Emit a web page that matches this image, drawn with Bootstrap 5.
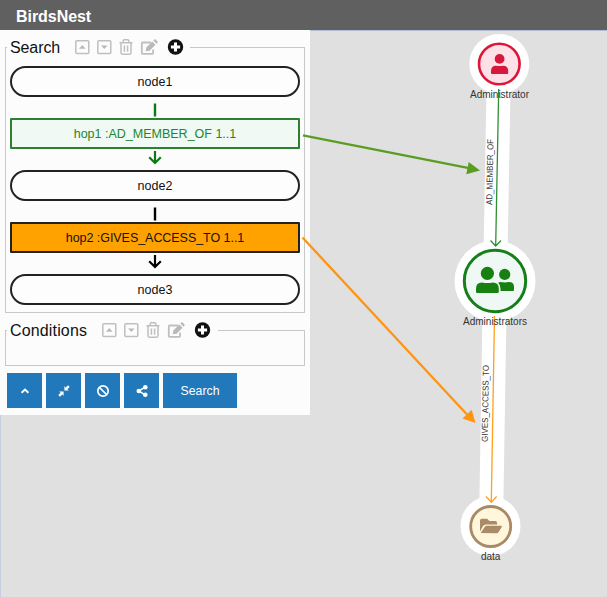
<!DOCTYPE html>
<html lang="en">
<head>
<meta charset="utf-8">
<meta name="viewport" content="width=device-width, initial-scale=1">
<title>BirdsNest</title>
<link href="https://cdn.jsdelivr.net/npm/bootstrap@5.3.0/dist/css/bootstrap.min.css" rel="stylesheet">
<style>
body { font-family: "Liberation Sans", Arial, sans-serif; color: #111; background: #e0e0e0; height: 597px; }
.top-bar { height: 30px; background: #606060; padding: 0 16px; }
.brand { font-size: 16px; font-weight: 700; line-height: 31px; padding-top: 1px; color: #fff; letter-spacing: -.05px; }
.stage { height: 567px; border-left: 1px solid #c5cfe0; border-top: 1px solid #b4bed3; }
.query-panel { width: 310px; height: 385px; margin: -1px 0 0 -1px; padding: 7px 5px 0; background: #fcfcfc; }
.group-box { border: 1px solid #c8c8c8; padding: 0 4px; }
.group-box legend { float: none; width: auto; height: 20px; margin: 0 0 0 -3px; padding: 0 6.3px 0 3px; font-size: 16px; line-height: 20px; letter-spacing: -.1px; }
.group-box legend span { padding-top: 2px; }
.path-box { height: 276px; }
.path-box legend { width: 183px; }
.cond-box { height: 46px; margin-top: 7px; }
.cond-box legend { width: 210.500px; letter-spacing: .15px; }
.path-list { padding-top: 9px; }
.step { height: 31px; border: 2px solid #222; padding-top: 1px; font-size: 12.5px; line-height: 1; }
.step-node { border-radius: 16px; background: #fdfdfd; }
.step-green { border-color: #2c8030; background: #f1f9f4; color: #23862a; border-radius: 1px; }
.step-orange { background: #ffa200; border-radius: 1px; letter-spacing: -.05px; }
.link-gap { height: 21px; }
.actions { gap: 4px; padding: 7px 2px 0; }
.actions .btn { width: 35px; height: 35px; background: #2179bb; color: #fff; border: 0; border-radius: 0; font-size: 12.3px; }
.actions .btn-wide { width: 74px; line-height: 36px; }
svg { display: block; flex: none; }
</style>
</head>
<body class="position-relative overflow-hidden">
<svg width="0" height="0" class="position-absolute">
  <defs>
    <g id="tools">
      <g fill="none" stroke="#bfbfbf" stroke-width="1.500">
        <rect x=".8" y="2.800" width="13" height="12.600" rx="1"/>
        <rect x="22.800" y="2.800" width="13" height="12.600" rx="1"/>
        <path d="M44.500 4.700h13M48.200 4.500V2.700q0-1 1-1h3.600q1 0 1 1v1.800M46 5v9.800q0 1.400 1.400 1.400h7.200q1.400 0 1.400-1.400V5M49.400 7.500v6.200M52.600 7.500v6.200"/>
        <path d="M76 4.500h-8.300q-.9 0-.9.9v9.500q0 .9.900.9h9.500q.9 0 .9-.9V11.500" stroke-width="1.800"/>
      </g>
      <path d="M4 10.700l3.300-3.600 3.300 3.600zM26 7.400h6.600l-3.300 3.600zM70.700 13.300l.6-3.800 6-6 3.200 3.200-6 6zM78.300 2.600l1-1q.7-.6 1.400 0l1.800 1.800q.6.700 0 1.400l-1 1z" fill="#b9b9b9"/>
      <circle cx="100.500" cy="9" r="7.700" fill="#111"/>
      <path d="M100.500 4.400v9.200M95.900 9h9.200" stroke="#fff" stroke-width="3"/>
    </g>
    <path id="bar" d="M5 6.500v13" fill="none" stroke="currentColor" stroke-width="2.400"/>
    <path id="down" d="M7 2v12M1.200 8.200L7 14l5.800-5.800" fill="none" stroke="currentColor" stroke-width="2.200"/>
  </defs>
</svg>

<nav class="navbar top-bar"><span class="brand">BirdsNest</span></nav>
<main class="stage">
  <section class="query-panel position-relative">
    <fieldset class="group-box path-box">
      <legend class="d-flex align-items-center"><span class="me-auto">Search</span><svg width="109" height="18"><use href="#tools"/></svg></legend>
      <div class="path-list d-flex flex-column">
        <div class="step step-node d-flex align-items-center justify-content-center">node1</div>
        <div class="link-gap d-flex justify-content-center"><svg width="10" height="21" color="#0b7a12"><use href="#bar"/></svg></div>
        <div class="step step-green d-flex align-items-center justify-content-center">hop1 :AD_MEMBER_OF 1..1</div>
        <div class="link-gap d-flex justify-content-center"><svg width="14" height="21" color="#0b7a12"><use href="#down"/></svg></div>
        <div class="step step-node d-flex align-items-center justify-content-center">node2</div>
        <div class="link-gap d-flex justify-content-center"><svg width="10" height="21" color="#000"><use href="#bar"/></svg></div>
        <div class="step step-orange d-flex align-items-center justify-content-center">hop2 :GIVES_ACCESS_TO 1..1</div>
        <div class="link-gap d-flex justify-content-center"><svg width="14" height="21" color="#000"><use href="#down"/></svg></div>
        <div class="step step-node d-flex align-items-center justify-content-center">node3</div>
      </div>
    </fieldset>
    <fieldset class="group-box cond-box">
      <legend class="d-flex align-items-center"><span class="me-auto">Conditions</span><svg width="109" height="18"><use href="#tools"/></svg></legend>
    </fieldset>
    <div class="actions d-flex">
      <button class="btn p-0 d-flex align-items-center justify-content-center" aria-label="Collapse"><svg width="14" height="14" fill="none" stroke="#fff" stroke-width="1.900"><path d="M3.600 8.800L7 5.500 10.400 8.800"/></svg></button>
      <button class="btn p-0 d-flex align-items-center justify-content-center" aria-label="Shrink"><svg width="14" height="14" fill="#fff"><path d="M7.400 2.200v4.400h4.400L10.400 5.200 12.700 3 11 1.300 8.800 3.500zM6.600 11.800V7.400H2.200l1.400 1.400L1.300 11 3 12.700l2.200-2.200z"/></svg></button>
      <button class="btn p-0 d-flex align-items-center justify-content-center" aria-label="Clear"><svg width="14" height="14" fill="none" stroke="#fff" stroke-width="1.700"><circle cx="7" cy="7" r="5.200"/><path d="M3.500 3.500l7 7"/></svg></button>
      <button class="btn p-0 d-flex align-items-center justify-content-center" aria-label="Share"><svg width="14" height="14" fill="#fff" stroke="#fff" stroke-width="1.500"><path d="M10 3.200L3.800 7l6.200 3.800" fill="none"/><g stroke="none"><circle cx="10.300" cy="3.200" r="2.300"/><circle cx="3.800" cy="7" r="2.300"/><circle cx="10.300" cy="10.800" r="2.300"/></g></svg></button>
      <button class="btn btn-wide p-0">Search</button>
    </div>
  </section>
</main>

<svg class="position-absolute top-0 start-0 pe-none" width="607" height="597" font-family="Liberation Sans, Arial, sans-serif">
  <g stroke="#fff" stroke-width="24" fill="none"><path d="M499 64L495 281L491 526"/></g>
  <g fill="#fff"><circle cx="499.300" cy="64" r="30"/><circle cx="495" cy="281" r="40.500"/><circle cx="490.500" cy="526" r="30"/></g>
  <path d="M498.700 89L495.700 245M490.500 240.500l5.200 5.500 5.300-5.500" fill="none" stroke="#2f8f32" stroke-width="1.300"/>
  <path d="M494.500 316L491.300 502M486 496.500l5.300 5.800 5.300-5.800" fill="none" stroke="#ffa01c" stroke-width="1.300"/>
  <circle cx="499.300" cy="64" r="20.300" fill="#fde1e7" stroke="#dc1638" stroke-width="2.600"/>
  <g fill="#d5183c"><circle cx="499.600" cy="58.900" r="4.900"/><path d="M491 73v-1.800q0-5.500 5-5.500 3.600.8 7.200 0 5 0 5 5.500V73q0 1-1 1H492q-1 0-1-1z"/></g>
  <circle cx="495" cy="281" r="30.700" fill="#eff8f4" stroke="#157f19" stroke-width="3"/>
  <g fill="#168011"><circle cx="487.400" cy="273.400" r="6.600"/><path d="M476 291.800v-3.300q0-6 6-6 5.400 1 10.800 0 6 0 6 6v3.300q0 1.200-1.200 1.200h-20.400q-1.200 0-1.200-1.200z"/><circle cx="504.700" cy="274.400" r="5.600"/><path d="M500.500 291v-2.500q0-3.500-2.300-5.800 1-.7 2.300-.7 4.300.9 8.500 0 5 0 5 5v3q0 1-1 1z"/></g>
  <circle cx="490.700" cy="526.500" r="20" fill="#fff6dc" stroke="#a98a66" stroke-width="2.800"/>
  <g fill="#aa8b68"><path d="M480 531.500v-11q0-1.700 1.700-1.700h5.500l2.200 2.200h6q1.700 0 1.700 1.700v1.800h-11q-2.200 0-3.200 1.700z"/><path d="M480.700 533l4-6q.6-1.200 2-1.200h14.500q1 0 .5 1.100l-3 5q-.7 1.300-2.200 1.300z"/></g>
  <g fill="#333" font-size="10" text-anchor="middle">
    <text x="499.500" y="97.500" textLength="59" lengthAdjust="spacingAndGlyphs">Administrator</text>
    <text x="495" y="324.700" textLength="64" lengthAdjust="spacingAndGlyphs">Administrators</text>
    <text x="490.700" y="560" textLength="19.500" lengthAdjust="spacingAndGlyphs">data</text>
    <text transform="translate(492.800 172) rotate(-89)" font-size="8.700" textLength="66" lengthAdjust="spacingAndGlyphs">AD_MEMBER_OF</text>
    <text transform="translate(488.300 403.500) rotate(-89)" font-size="8.700" textLength="77" lengthAdjust="spacingAndGlyphs">GIVES_ACCESS_TO</text>
  </g>
  <path d="M303 135.300L469 168.200" stroke="#5b9c22" stroke-width="2.300"/><path d="M480 170.400L466.300 174.300 468.700 162z" fill="#5b9c22"/>
  <path d="M302.500 237.500L467 414.500" stroke="#ff9412" stroke-width="2.300"/><path d="M475.500 423L462.500 418.500 471.700 409.700z" fill="#ff9412"/>
</svg>
<script src="https://cdn.jsdelivr.net/npm/bootstrap@5.3.0/dist/js/bootstrap.bundle.min.js"></script>
</body>
</html>
